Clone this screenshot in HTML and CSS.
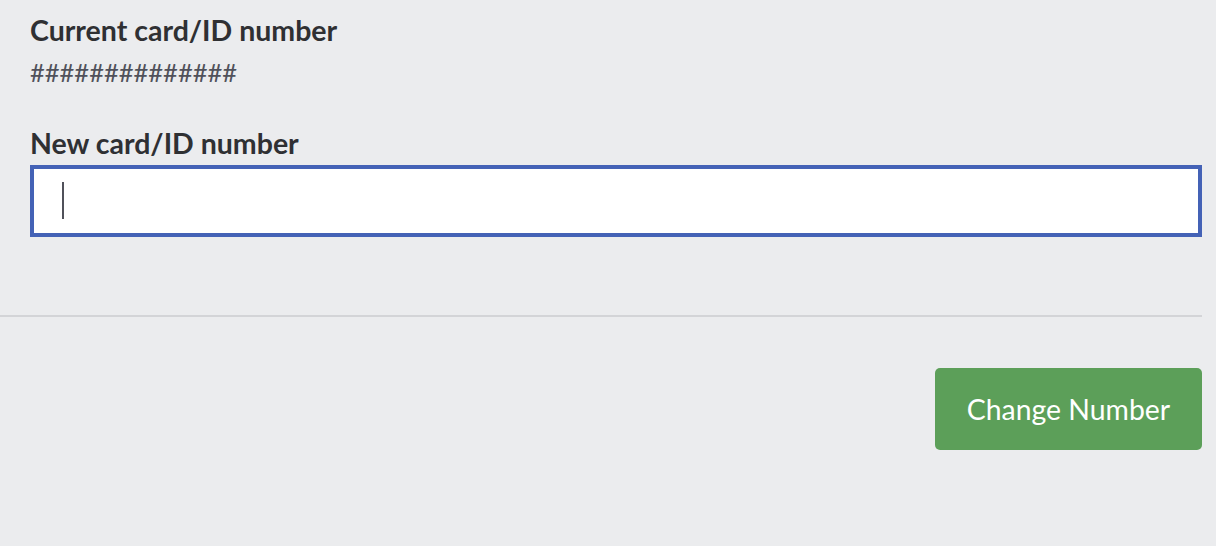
FILE: index.html
```html
<!DOCTYPE html>
<html>
<head>
<meta charset="utf-8">
<link rel="stylesheet" href="styles.css">
</head>
<body>
<div class="page">
  <section class="form">
    <div class="field">
      <div class="label">Current card/ID number</div>
      <div class="value">##############</div>
    </div>
    <div class="field field-new">
      <label class="label" for="newnum">New card/ID number</label>
      <div class="input-wrap">
        <input id="newnum" class="input" type="text">
        <span class="caret"></span>
      </div>
    </div>
  </section>
  <hr class="divider">
  <div class="actions">
    <button class="btn">Change Number</button>
  </div>
</div>
</body>
</html>
```
FILE: styles.css
```css
html, body {
  margin: 0;
  padding: 0;
  background: #ebecee;
  font-family: "Lato", "Open Sans", sans-serif;
  color: #2f3033;
}
.page {
  width: 1202px;
  padding-top: 13px;
}
.form {
  padding-left: 30px;
}
.field {
  display: flex;
  flex-direction: column;
}
.label {
  font-weight: 700;
  font-size: 28.5px;
  line-height: 34px;
  color: #2f3033;
}
.value {
  font-size: 25.5px;
  line-height: 30px;
  color: #50515a;
  margin-top: 10px;
}
.field-new {
  margin-top: 39px;
}
.input-wrap {
  position: relative;
  margin-top: 5px;
}
.input {
  display: block;
  box-sizing: border-box;
  width: 1172px;
  height: 72px;
  border: 4px solid #4462b6;
  background: #fff;
  outline: none;
  margin: 0;
  caret-color: transparent;
}
.caret {
  position: absolute;
  left: 32px;
  top: 17px;
  width: 2px;
  height: 37px;
  background: #50515a;
}
.divider {
  border: 0;
  height: 2px;
  background: #d3d4d7;
  margin: 78px 0 0 0;
}
.actions {
  display: flex;
  justify-content: flex-end;
  margin-top: 51px;
}
.btn {
  width: 267px;
  height: 82px;
  background: #5c9f59;
  color: #fff;
  border: 0;
  border-radius: 5px;
  font-family: "Lato", "Open Sans", sans-serif;
  font-size: 28.4px;
  padding: 0;
}
```
